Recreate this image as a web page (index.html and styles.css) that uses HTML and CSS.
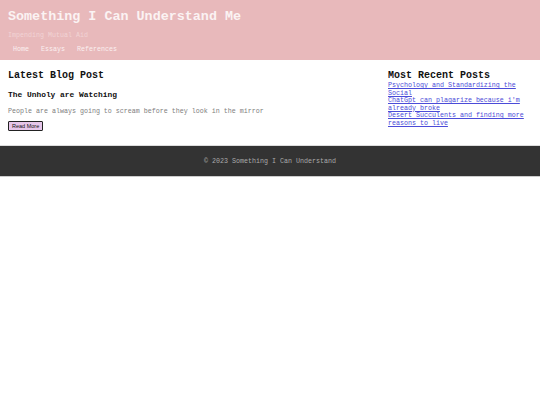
FILE: index.html
```html
<!DOCTYPE html>
<html>
<head>
<meta charset="utf-8">
<link rel="stylesheet" href="styles.css">
</head>
<body>
<header class="site-header">
  <h1 class="site-title">Something I Can Understand Me</h1>
  <p class="tagline">Impending Mutual Aid</p>
  <nav class="nav">
    <a href="#">Home</a>
    <a href="#">Essays</a>
    <a href="#">References</a>
  </nav>
</header>
<div class="content">
  <main class="main">
    <h2 class="section-title">Latest Blog Post</h2>
    <h3 class="post-title">The Unholy are Watching</h3>
    <p class="excerpt">People are always going to scream before they look in the mirror</p>
    <button class="read-more">Read More</button>
  </main>
  <aside class="sidebar">
    <h2 class="section-title">Most Recent Posts</h2>
    <ul class="recent">
      <li><a href="#">Psychology and Standardizing the Social</a></li>
      <li><a href="#">ChatGpt can plagarize because i'm already broke</a></li>
      <li><a href="#">Desert Succulents and finding more reasons to live</a></li>
    </ul>
  </aside>
</div>
<footer class="footer">
  <p>&copy; 2023 Something I Can Understand</p>
</footer>
</body>
</html>
```
FILE: styles.css
```css
html, body {
  margin: 0;
  padding: 0;
  background: #ffffff;
  font-family: "Liberation Mono", "Courier New", monospace;
}
.site-header {
  background: #e8b9bb;
  height: 60px;
  padding: 9px 8px 0;
  box-sizing: border-box;
}
.site-title {
  margin: 0;
  font-size: 13.4px;
  line-height: 16px;
  font-weight: bold;
  color: #fbf3f3;
}
.tagline {
  margin: 6px 0 0;
  font-size: 6.67px;
  line-height: 8px;
  color: #f2d4d5;
}
.nav {
  margin-top: 6px;
  display: flex;
  gap: 12px;
  padding-left: 5px;
}
.nav a {
  font-size: 6.67px;
  line-height: 8px;
  color: #fbf0f0;
  text-decoration: none;
}
.content {
  display: grid;
  grid-template-columns: 1fr 144px;
  gap: 16px;
  padding: 10px 8px 0;
  height: 85px;
  box-sizing: border-box;
}
.section-title {
  margin: 0;
  font-size: 10px;
  line-height: 12px;
  font-weight: bold;
  color: #111;
}
.post-title {
  margin: 8px 0 0;
  font-size: 7.9px;
  line-height: 10px;
  font-weight: bold;
  color: #111;
}
.excerpt {
  margin: 7px 0 0;
  font-size: 6.67px;
  line-height: 8px;
  color: #808080;
}
.read-more {
  margin-top: 4px;
  font-family: "Liberation Sans", Arial, sans-serif;
  font-size: 5.5px;
  line-height: 6px;
  padding: 1px 3px;
  background: #e6c6ea;
  border: 1px solid #222;
  border-radius: 1px;
  color: #111;
}
.recent {
  list-style: none;
  margin: 0;
  padding: 0;
}
.recent li {
  font-size: 6.67px;
  line-height: 7.5px;
}
.recent a {
  color: #4b4bd8;
}
.footer {
  background: #333333;
  height: 30px;
  display: flex;
  align-items: center;
  justify-content: center;
  border-top: 1px solid #ddd;
  border-bottom: 1px solid #ccc;
}
.footer p {
  margin: 0;
  font-size: 6.67px;
  color: #aaaaaa;
}
```
